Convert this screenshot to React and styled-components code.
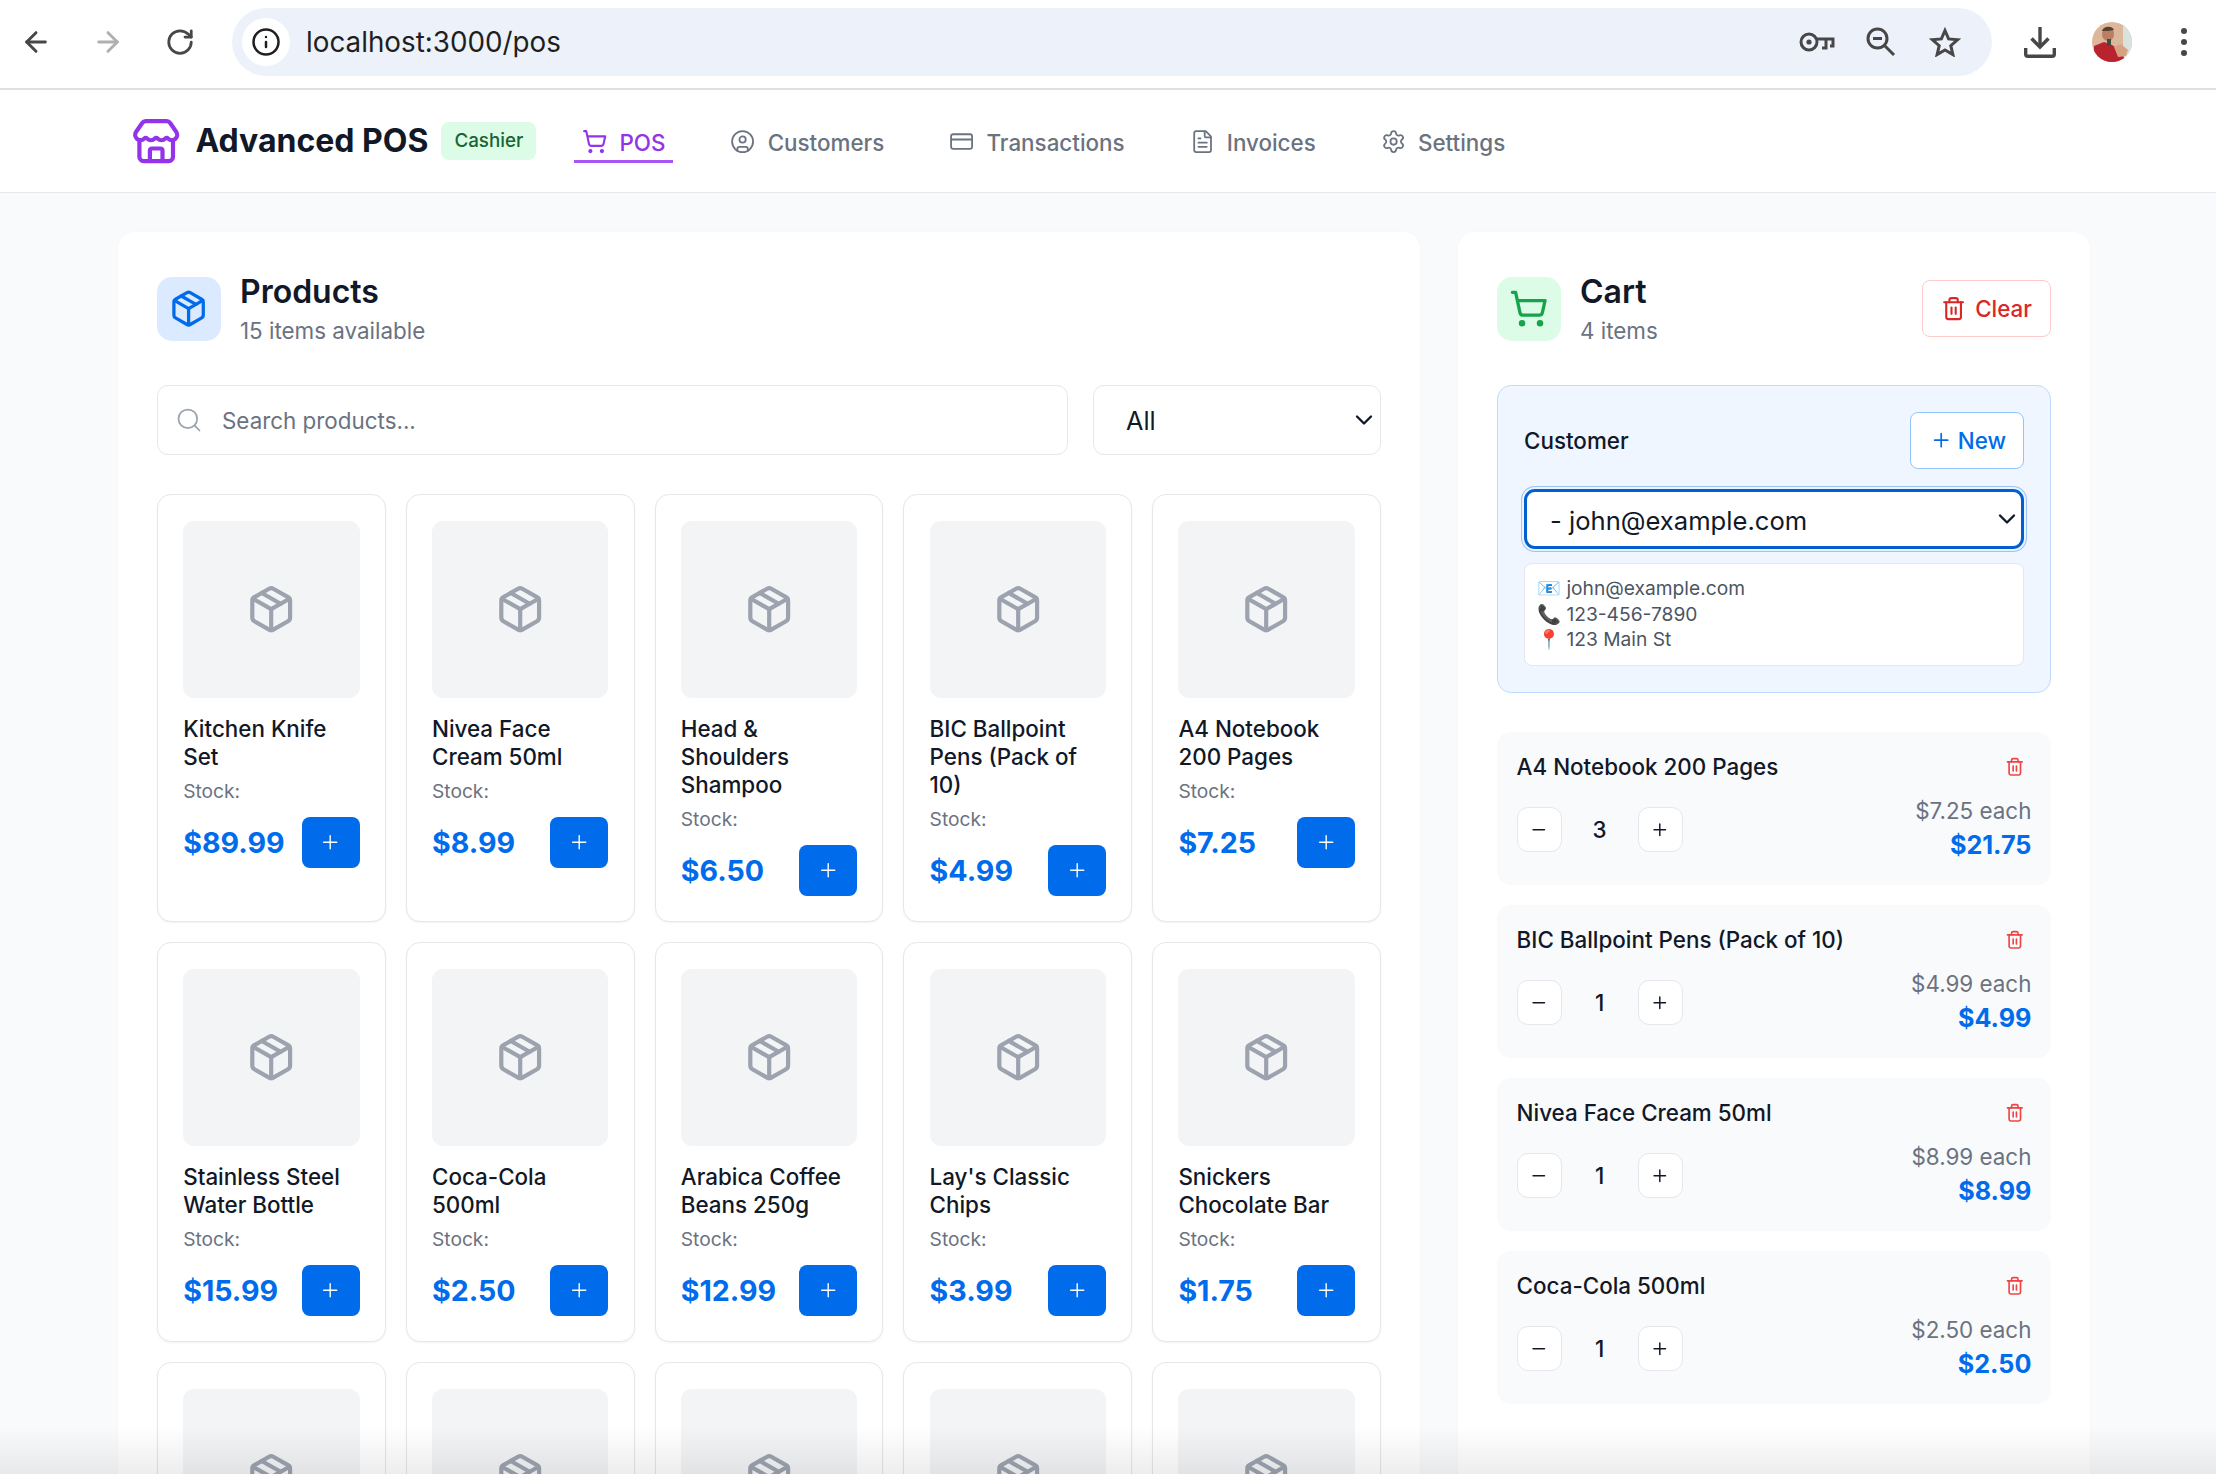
import React from "react";
import styled, { createGlobalStyle } from "styled-components";
import {
	ArrowLeft,
	ArrowRight,
	ChevronDown,
	CircleUser,
	CreditCard,
	FileText,
	Info,
	Minus,
	Package,
	Plus,
	RotateCw,
	Search,
	Settings,
	ShoppingCart,
	Store,
	Trash2,
} from "lucide-react";

const BLUE = "#006cec";

const products = [
	{ name: "Kitchen Knife Set", price: "$89.99" },
	{ name: "Nivea Face Cream 50ml", price: "$8.99" },
	{ name: "Head & Shoulders Shampoo", price: "$6.50" },
	{ name: "BIC Ballpoint Pens (Pack of 10)", price: "$4.99" },
	{ name: "A4 Notebook 200 Pages", price: "$7.25" },
	{ name: "Stainless Steel Water Bottle", price: "$15.99" },
	{ name: "Coca-Cola 500ml", price: "$2.50" },
	{ name: "Arabica Coffee Beans 250g", price: "$12.99" },
	{ name: "Lay's Classic Chips", price: "$3.99" },
	{ name: "Snickers Chocolate Bar", price: "$1.75" },
];

const cartItems = [
	{ name: "A4 Notebook 200 Pages", qty: 3, each: "$7.25", total: "$21.75" },
	{ name: "BIC Ballpoint Pens (Pack of 10)", qty: 1, each: "$4.99", total: "$4.99" },
	{ name: "Nivea Face Cream 50ml", qty: 1, each: "$8.99", total: "$8.99" },
	{ name: "Coca-Cola 500ml", qty: 1, each: "$2.50", total: "$2.50" },
];

const navItems = [
	{ label: "POS", icon: ShoppingCart, active: true },
	{ label: "Customers", icon: CircleUser },
	{ label: "Transactions", icon: CreditCard },
	{ label: "Invoices", icon: FileText },
	{ label: "Settings", icon: Settings },
];

const KeyIcon = () => (
	<svg width="36" height="20" viewBox="0 0 36 20" fill="none" stroke="#474747" strokeWidth="3">
		<circle cx="10" cy="10" r="8" />
		<circle cx="10" cy="10" r="2.6" fill="#474747" stroke="none" />
		<path d="M18 7h16v7h-3M27 7v9h-4" />
	</svg>
);

const ZoomOutIcon = () => (
	<svg width="30" height="30" viewBox="0 0 30 30" fill="none" stroke="#474747" strokeWidth="3">
		<circle cx="11.5" cy="11.5" r="9.5" />
		<path d="M7 11.5h9" />
		<path d="M18.5 18.5 28 28" />
	</svg>
);

const StarIcon = () => (
	<svg width="32" height="30" viewBox="0 0 32 30" fill="none" stroke="#474747" strokeWidth="3" strokeLinejoin="miter">
		<path d="M16 3.5l3.6 8.4 9.1.8-6.9 6 2.1 8.9L16 22.9l-7.9 4.7 2.1-8.9-6.9-6 9.1-.8z" />
	</svg>
);

const DownloadIcon = () => (
	<svg width="32" height="32" viewBox="0 0 32 32" fill="none" stroke="#474747" strokeWidth="3.4">
		<path d="M16 1v19" />
		<path d="M7.5 12.5 16 21l8.500-8.500" />
		<path d="M1.700 22v6.300a2 2 0 0 0 2 2h24.600a2 2 0 0 0 2-2V22" />
	</svg>
);

const MoreIcon = () => (
	<svg width="8" height="30" viewBox="0 0 8 30" fill="#474747">
		<circle cx="4" cy="4" r="3" />
		<circle cx="4" cy="15" r="3" />
		<circle cx="4" cy="26" r="3" />
	</svg>
);

const Avatar = () => (
	<svg width="40" height="40" viewBox="0 0 40 40">
		<clipPath id="avatar-clip">
			<circle cx="20" cy="20" r="20" />
		</clipPath>
		<g clipPath="url(#avatar-clip)">
			<rect width="40" height="40" fill="#dcb79b" />
			<rect x="31" width="9" height="40" fill="#d7e3dc" />
			<path d="M2 40V24l10-4 8 3 9 6 5 11z" fill="#b8232e" />
			<path d="M22 25l7-3 7 6-2 6-8 1z" fill="#d9a183" />
			<ellipse cx="16" cy="12" rx="6" ry="7" fill="#b97f64" />
			<path d="M10 9c1-5 10-6 12-1l-6 1z" fill="#5a4030" />
			<rect x="15" y="17" width="4" height="7" fill="#3d4f3f" />
		</g>
	</svg>
);

const App = () => {
	return (
		<Page>
			<GlobalStyle />
			<Toolbar>
				<ToolButton><ArrowLeft size={32} color="#474747" strokeWidth={2.2} /></ToolButton>
				<ToolButton><ArrowRight size={32} color="#b0b0b0" strokeWidth={2.2} /></ToolButton>
				<ToolButton><RotateCw size={30} color="#474747" strokeWidth={2.2} /></ToolButton>
				<AddressBar>
					<InfoBadge><Info size={30} color="#1f1f1f" strokeWidth={2} /></InfoBadge>
					<Url>localhost:3000/pos</Url>
					<AddressActions>
						<ToolButton><KeyIcon /></ToolButton>
						<ToolButton><ZoomOutIcon /></ToolButton>
						<ToolButton><StarIcon /></ToolButton>
					</AddressActions>
				</AddressBar>
				<ToolActions>
					<ToolButton><DownloadIcon /></ToolButton>
					<ToolButton><Avatar /></ToolButton>
					<ToolButton><MoreIcon /></ToolButton>
				</ToolActions>
			</Toolbar>

			<Header>
				<Brand>
					<BrandIcon><Store size={50.4} color="#9333ea" /></BrandIcon>
					<BrandName>Advanced POS</BrandName>
					<RoleBadge>Cashier</RoleBadge>
				</Brand>
				<Nav>
					{navItems.map(({ label, icon: Icon, active }) => (
						<NavItem key={label} $active={active}>
							<Icon size={25.2} strokeWidth={active ? 2 : 1.7} />
							{label}
						</NavItem>
					))}
				</Nav>
			</Header>

			<Main>
				<Panel>
					<PanelHeader>
						<PanelTitleGroup>
							<IconBox $bg="#dbeafe"><Package size={39.2} color={BLUE} /></IconBox>
							<div>
								<PanelTitle>Products</PanelTitle>
								<PanelSub>15 items available</PanelSub>
							</div>
						</PanelTitleGroup>
					</PanelHeader>

					<Filters>
						<SearchWrap>
							<SearchIcon><Search size={28} strokeWidth={1.5} /></SearchIcon>
							<SearchInput placeholder="Search products..." />
						</SearchWrap>
						<CategoryWrap>
							<CategorySelect>
								<option>All</option>
							</CategorySelect>
							<SelectArrow><ChevronDown size={28} color="#111827" strokeWidth={2} /></SelectArrow>
						</CategoryWrap>
					</Filters>

					<ProductGrid>
						{products.map((p) => (
							<ProductCard key={p.name}>
								<ProductImage><Package size={50.4} color="#9ca3af" /></ProductImage>
								<ProductName>{p.name}</ProductName>
								<Stock>Stock:</Stock>
								<PriceRow>
									<Price>{p.price}</Price>
									<AddButton><Plus size={22.4} strokeWidth={1.5} /></AddButton>
								</PriceRow>
							</ProductCard>
						))}
						{[0, 1, 2, 3, 4].map((i) => (
							<ProductCard key={i}>
								<ProductImage><Package size={50.4} color="#9ca3af" /></ProductImage>
							</ProductCard>
						))}
					</ProductGrid>
				</Panel>

				<Panel>
					<PanelHeader>
						<PanelTitleGroup>
							<IconBox $bg="#dcfce7"><ShoppingCart size={39.2} color="#16a34a" /></IconBox>
							<div>
								<PanelTitle>Cart</PanelTitle>
								<PanelSub>4 items</PanelSub>
							</div>
						</PanelTitleGroup>
						<ClearButton><Trash2 size={25.2} strokeWidth={2} />Clear</ClearButton>
					</PanelHeader>

					<CustomerBox>
						<CustomerTop>
							<CustomerLabel>Customer</CustomerLabel>
							<NewButton><Plus size={22.4} strokeWidth={1.8} />New</NewButton>
						</CustomerTop>
						<CustomerSelectWrap>
							<CustomerSelect>
								<option>- john@example.com</option>
							</CustomerSelect>
							<SelectArrow><ChevronDown size={28} color="#111827" strokeWidth={2} /></SelectArrow>
						</CustomerSelectWrap>
						<CustomerInfo>
							<div>📧 john@example.com</div>
							<div>📞 123-456-7890</div>
							<div>📍 123 Main St</div>
						</CustomerInfo>
					</CustomerBox>

					<CartList>
						{cartItems.map((item) => (
							<CartItem key={item.name}>
								<CartItemTop>
									<CartItemName>{item.name}</CartItemName>
									<RemoveButton><Trash2 size={19.6} /></RemoveButton>
								</CartItemTop>
								<CartItemBottom>
									<Stepper>
										<StepButton><Minus size={19.6} strokeWidth={1.8} /></StepButton>
										<Qty>{item.qty}</Qty>
										<StepButton><Plus size={19.6} strokeWidth={1.8} /></StepButton>
									</Stepper>
									<Amounts>
										<Each>{item.each} each</Each>
										<Total>{item.total}</Total>
									</Amounts>
								</CartItemBottom>
							</CartItem>
						))}
					</CartList>
				</Panel>
			</Main>
			<BottomFade />
		</Page>
	);
};

const GlobalStyle = createGlobalStyle`
	* {
		box-sizing: border-box;
	}
	html, body {
		margin: 0;
		padding: 0;
		background: #f9fafb;
		font-family: Inter, "Noto Sans", sans-serif;
		color: #111827;
	}
`;

const Page = styled.div`
	position: relative;
	height: 1474px;
	overflow: hidden;
	background: #f9fafb;
`;

const Toolbar = styled.div`
	display: flex;
	align-items: center;
	gap: 24px;
	height: 90px;
	padding: 0 8px 4px 12px;
	background: #fff;
	border-bottom: 2px solid #e0e0e0;
`;

const ToolButton = styled.div`
	display: flex;
	align-items: center;
	justify-content: center;
	flex: none;
	width: 48px;
	height: 48px;
`;

const AddressBar = styled.div`
	display: flex;
	align-items: center;
	flex: 1;
	height: 68px;
	margin-left: 4px;
	padding: 0 23px 0 10px;
	border-radius: 34px;
	background: #edf2fa;
`;

const InfoBadge = styled.div`
	display: flex;
	align-items: center;
	justify-content: center;
	width: 48px;
	height: 48px;
	border-radius: 50%;
	background: #fff;
`;

const Url = styled.span`
	flex: 1;
	margin-left: 16px;
	font-size: 27.8px;
	color: #1f1f1f;
`;

const AddressActions = styled.div`
	display: flex;
	align-items: center;
	gap: 16px;
`;

const ToolActions = styled.div`
	display: flex;
	align-items: center;
	gap: 24px;
`;

const Header = styled.header`
	display: flex;
	align-items: center;
	gap: 38px;
	height: 103px;
	padding: 0 0 0 131px;
	background: #fff;
	border-bottom: 1px solid #e5e7eb;
`;

const Brand = styled.div`
	display: flex;
	align-items: center;
`;

const BrandIcon = styled.span`
	display: flex;
	margin-top: 2px;
`;

const BrandName = styled.h1`
	margin: 0 13px 0 14px;
	font-size: 32px;
	font-weight: 700;
	line-height: 39px;
	color: #111827;
`;

const RoleBadge = styled.span`
	display: flex;
	align-items: center;
	height: 38px;
	padding: 0 13px;
	border-radius: 8px;
	background: #dcfce7;
	color: #166534;
	font-size: 18.8px;
	font-weight: 500;
`;

const Nav = styled.nav`
	display: flex;
	gap: 49px;
	margin-top: 5px;
`;

const NavItem = styled.a`
	display: flex;
	align-items: center;
	gap: 12px;
	height: 38px;
	padding: 0 8px;
	font-size: 22.4px;
	font-weight: 500;
	color: ${({ $active }) => ($active ? "#9333ea" : "#6b7280")};
	border-bottom: 3px solid ${({ $active }) => ($active ? "#a855f7" : "transparent")};
`;

const Main = styled.main`
	display: grid;
	grid-template-columns: 1302px 632px;
	gap: 38px;
	padding: 39px 126px 0 118px;
`;

const Panel = styled.section`
	padding: 39px;
	border-radius: 16px;
	background: #fff;
	box-shadow: 0 0 2px rgba(0, 0, 0, 0.03);
`;

const PanelHeader = styled.div`
	display: flex;
	align-items: center;
	justify-content: space-between;
	margin-bottom: 39px;
`;

const PanelTitleGroup = styled.div`
	display: flex;
	align-items: center;
	gap: 19px;
`;

const IconBox = styled.div`
	display: flex;
	align-items: center;
	justify-content: center;
	width: 64px;
	height: 64px;
	border-radius: 15px;
	background: ${({ $bg }) => $bg};
`;

const PanelTitle = styled.h2`
	margin: 0;
	padding-top: 1px;
	font-size: 32px;
	font-weight: 600;
	line-height: 39px;
	color: #111827;
`;

const PanelSub = styled.p`
	margin: 4px 0 -1px;
	font-size: 22.4px;
	line-height: 32px;
	color: #6b7280;
`;

const ClearButton = styled.button`
	display: flex;
	align-items: center;
	gap: 9px;
	height: 57px;
	padding: 0 18px;
	border: 1px solid #fecaca;
	border-radius: 8px;
	background: #fff;
	color: #dc2626;
	font: 500 22.4px Inter, sans-serif;
`;

const Filters = styled.div`
	display: flex;
	gap: 25px;
	margin-bottom: 39px;
`;

const SearchWrap = styled.div`
	position: relative;
	flex: 1;
`;

const SearchIcon = styled.span`
	position: absolute;
	left: 18px;
	top: 21px;
	display: flex;
	color: #9ca3af;
`;

const SearchInput = styled.input`
	width: 100%;
	height: 70px;
	padding: 0 20px 0 64px;
	border: 1px solid #e5e7eb;
	border-radius: 11px;
	background: #fff;
	font: 400 22.4px Inter, sans-serif;
	color: #111827;
	outline: none;

	&::placeholder {
		color: #6b7280;
		opacity: 1;
	}
`;

const CategoryWrap = styled.div`
	position: relative;
	flex: none;
	width: 288px;
`;

const CategorySelect = styled.select`
	width: 100%;
	height: 70px;
	padding: 2px 32px 0;
	border: 1px solid #e5e7eb;
	border-radius: 11px;
	background: #fff;
	appearance: none;
	font: 400 25.2px Inter, sans-serif;
	color: #111827;
`;

const SelectArrow = styled.span`
	position: absolute;
	right: 3px;
	top: 50%;
	display: flex;
	transform: translateY(-50%);
	pointer-events: none;
`;

const ProductGrid = styled.div`
	display: grid;
	grid-template-columns: repeat(5, 1fr);
	gap: 19.6px 20px;
`;

const ProductCard = styled.article`
	padding: 26.2px 25.2px 25.2px;
	border: 1px solid #e5e7eb;
	border-radius: 14px;
	background: #fff;
	box-shadow: 0 1px 2px rgba(0, 0, 0, 0.05);
`;

const ProductImage = styled.div`
	display: flex;
	align-items: center;
	justify-content: center;
	aspect-ratio: 1;
	margin-bottom: 17.5px;
	border-radius: 11px;
	background: #f3f4f6;
`;

const ProductName = styled.h3`
	margin: 0 0 6px;
	font-size: 22.4px;
	font-weight: 500;
	line-height: 28px;
	color: #111827;
`;

const Stock = styled.p`
	margin: 0 0 12px;
	font-size: 19.2px;
	line-height: 28px;
	color: #6b7280;
`;

const PriceRow = styled.div`
	display: flex;
	align-items: center;
	justify-content: space-between;
`;

const Price = styled.span`
	font-size: 28.6px;
	font-weight: 700;
	color: ${BLUE};
`;

const AddButton = styled.button`
	display: flex;
	align-items: center;
	justify-content: center;
	flex: none;
	width: 58px;
	height: 51px;
	padding: 0;
	border: 0;
	border-radius: 8px;
	background: ${BLUE};
	color: #fff;
`;

const CustomerBox = styled.div`
	margin-bottom: 39px;
	padding: 26px;
	border: 1px solid #bfdbfe;
	border-radius: 14px;
	background: #eff6ff;
`;

const CustomerTop = styled.div`
	display: flex;
	align-items: center;
	justify-content: space-between;
	margin-bottom: 20px;
`;

const CustomerLabel = styled.span`
	font-size: 22.4px;
	font-weight: 500;
	color: #111827;
`;

const NewButton = styled.button`
	display: flex;
	align-items: center;
	gap: 5px;
	height: 57px;
	padding: 0 17px 0 19px;
	border: 1px solid #93c5fd;
	border-radius: 8px;
	background: #fff;
	color: ${BLUE};
	font: 500 22.4px Inter, sans-serif;
`;

const CustomerSelectWrap = styled.div`
	position: relative;
	margin-bottom: 14px;
`;

const CustomerSelect = styled.select`
	width: 100%;
	height: 60px;
	padding: 2px 23px 0;
	border: 3px solid #0060cf;
	border-radius: 11px;
	background: #fff;
	box-shadow: 0 0 0 2px #eaf3ff, 0 0 0 3px #9cc5f5;
	appearance: none;
	font: 400 25.6px Inter, sans-serif;
	color: #111827;
	outline: none;
`;

const CustomerInfo = styled.div`
	padding: 12px 12px;
	border: 1px solid #e5e7eb;
	border-radius: 8px;
	background: #fff;
	font-size: 19.2px;
	line-height: 25.500px;
	color: #4b5563;
`;

const CartList = styled.div`
	display: flex;
	flex-direction: column;
	gap: 19.6px;
`;

const CartItem = styled.div`
	padding: 19.1px 19.6px 21.5px;
	border-radius: 14px;
	background: #f9fafb;
`;

const CartItemTop = styled.div`
	display: flex;
	align-items: center;
	justify-content: space-between;
	margin-bottom: 13.1px;
`;

const CartItemName = styled.span`
	font-size: 22.4px;
	font-weight: 500;
	line-height: 31.4px;
	color: #111827;
`;

const RemoveButton = styled.span`
	display: flex;
	margin-right: 7px;
	color: #ef4444;
`;

const CartItemBottom = styled.div`
	display: flex;
	align-items: center;
	justify-content: space-between;
`;

const Stepper = styled.div`
	display: flex;
	align-items: center;
`;

const StepButton = styled.button`
	display: flex;
	align-items: center;
	justify-content: center;
	width: 45px;
	height: 45px;
	padding: 0;
	border: 1px solid #e5e7eb;
	border-radius: 11px;
	background: #fff;
	color: #111827;
`;

const Qty = styled.span`
	width: 76px;
	text-align: center;
	font-size: 22.4px;
	font-weight: 500;
	color: #111827;
`;

const Amounts = styled.div`
	text-align: right;
`;

const Each = styled.div`
	font-size: 22.4px;
	line-height: 31.4px;
	color: #6b7280;
`;

const Total = styled.div`
	font-size: 25.2px;
	font-weight: 700;
	line-height: 37px;
	color: ${BLUE};
`;

const BottomFade = styled.div`
	position: absolute;
	left: 0;
	right: 0;
	bottom: 0;
	height: 48px;
	background: linear-gradient(to bottom, rgba(0, 0, 0, 0), rgba(0, 0, 0, 0.07));
	pointer-events: none;
`;

export default App;
